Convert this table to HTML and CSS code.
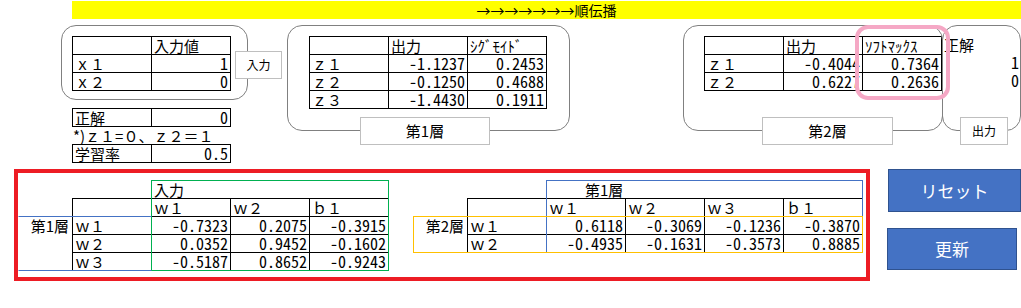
FILE: index.html
```html
<!DOCTYPE html>
<html lang="ja">
<head>
<meta charset="utf-8">
<title>順伝播</title>
<link rel="stylesheet" href="styles.css">
</head>
<body>
<div class="sheet">
  <div class="title">→→→→→→→順伝播</div>

  <div class="tbl t1">
    <div class="c"></div><div class="c">入力値</div>
    <div class="c">ｘ１</div><div class="c n">1</div>
    <div class="c">ｘ２</div><div class="c n">0</div>
  </div>

  <div class="tbl t-ans">
    <div class="c">正解</div><div class="c n">0</div>
  </div>
  <div class="note">*)ｚ１=０、ｚ２＝１</div>
  <div class="tbl t-lr">
    <div class="c">学習率</div><div class="c n">0.5</div>
  </div>

  <div class="tbl t2">
    <div class="c"></div><div class="c">出力</div><div class="c kana">ｼｸﾞﾓｲﾄﾞ</div>
    <div class="c">ｚ１</div><div class="c n">-1.1237</div><div class="c n">0.2453</div>
    <div class="c">ｚ２</div><div class="c n">-0.1250</div><div class="c n">0.4688</div>
    <div class="c">ｚ３</div><div class="c n">-1.4430</div><div class="c n">0.1911</div>
  </div>

  <div class="tbl t3">
    <div class="c"></div><div class="c">出力</div><div class="c kana">ｿﾌﾄﾏｯｸｽ</div>
    <div class="c">ｚ１</div><div class="c n">-0.4044</div><div class="c n">0.7364</div>
    <div class="c">ｚ２</div><div class="c n">0.6227</div><div class="c n">0.2636</div>
  </div>
  <div class="col-ans">
    <div class="c">正解</div>
    <div class="c n">1</div>
    <div class="c n">0</div>
  </div>

  <div class="head h-in">入力</div>
  <div class="side s1">第1層</div>
  <div class="tbl w1">
    <div class="c"></div><div class="c">ｗ１</div><div class="c">ｗ２</div><div class="c">ｂ１</div>
    <div class="c">ｗ１</div><div class="c n">-0.7323</div><div class="c n">0.2075</div><div class="c n">-0.3915</div>
    <div class="c">ｗ２</div><div class="c n">0.0352</div><div class="c n">0.9452</div><div class="c n">-0.1602</div>
    <div class="c">ｗ３</div><div class="c n">-0.5187</div><div class="c n">0.8652</div><div class="c n">-0.9243</div>
  </div>

  <div class="head h-l1">第1層</div>
  <div class="side s2">第2層</div>
  <div class="tbl w2">
    <div class="c"></div><div class="c">ｗ１</div><div class="c">ｗ２</div><div class="c">ｗ３</div><div class="c">ｂ１</div>
    <div class="c">ｗ１</div><div class="c n">0.6118</div><div class="c n">-0.3069</div><div class="c n">-0.1236</div><div class="c n">-0.3870</div>
    <div class="c">ｗ２</div><div class="c n">-0.4935</div><div class="c n">-0.1631</div><div class="c n">-0.3573</div><div class="c n">0.8885</div>
  </div>
</div>

<!-- floating shapes over the sheet -->
<div class="shape round r-a"></div>
<div class="shape round r-b"></div>
<div class="shape round r-c"></div>
<div class="shape round r-d"></div>

<div class="shape label l-in small">入力</div>
<div class="shape label l-1">第1層</div>
<div class="shape label l-2">第2層</div>
<div class="shape label l-out small">出力</div>

<div class="shape pink"></div>

<div class="shape range g-box"></div>
<div class="shape range b-left"></div>
<div class="shape range b-right"></div>
<div class="shape range o-box"></div>

<div class="shape red"></div>

<div class="shape btn btn-reset">リセット</div>
<div class="shape btn btn-update">更新</div>
</body>
</html>
```

FILE: styles.css
```css
html, body {
  margin: 0;
  padding: 0;
  background: #fff;
}

body {
  position: relative;
  width: 1021px;
  height: 308px;
  overflow: hidden;
  font-family: "Noto Sans CJK JP", "Noto Sans", sans-serif;
  font-size: 15px;
  line-height: 18px;
  color: #000;
}

.sheet {
  display: grid;
  grid-template-columns: 55px repeat(12, 79px);
  grid-template-rows: repeat(17, 18px);
  margin: 1px 0 0 18px;
}

.title {
  grid-column: 2 / 14;
  grid-row: 1;
  margin-left: -1px;
  background: #ffff00;
  text-align: center;
  font-size: 14px;
  white-space: nowrap;
}

.tbl {
  display: grid;
  grid-auto-rows: 18px;
  border-top: 1px solid #000;
  border-left: 1px solid #000;
  margin: -1px 0 0 -1px;
}

.c {
  border-right: 1px solid #000;
  border-bottom: 1px solid #000;
  padding: 0 2px;
  white-space: nowrap;
  height: 18px;
  line-height: 17px;
  box-sizing: border-box;
}

.n {
  text-align: right;
  font-size: 16px;
  font-feature-settings: "hwid" 1;
}

.kana {
  font-size: 15px;
}

.t1 { grid-column: 2 / 4; grid-row: 3 / 6; grid-template-columns: repeat(2, 79px); }
.t-ans { grid-column: 2 / 4; grid-row: 7 / 8; grid-template-columns: repeat(2, 79px); }
.t-lr { grid-column: 2 / 4; grid-row: 9 / 10; grid-template-columns: repeat(2, 79px); }
.note { grid-column: 2 / 6; grid-row: 8; white-space: nowrap; }

.t2 { grid-column: 5 / 8; grid-row: 3 / 7; grid-template-columns: repeat(3, 79px); }
.t3 { grid-column: 10 / 13; grid-row: 3 / 6; grid-template-columns: repeat(3, 79px); }

.col-ans {
  grid-column: 13 / 14;
  grid-row: 3 / 6;
  display: grid;
  grid-auto-rows: 18px;
  margin-top: -1px;
}
.col-ans .c { border: none; }

.head { grid-row: 11; white-space: nowrap; padding-left: 2px; }
.h-in { grid-column: 3 / 6; }
.h-l1 { grid-column: 8 / 12; padding-left: 38px; }

.side { grid-row: 13; text-align: right; padding-right: 4px; white-space: nowrap; }
.s1 { grid-column: 1 / 2; }
.s2 { grid-column: 6 / 7; }

.w1 { grid-column: 2 / 6; grid-row: 12 / 16; grid-template-columns: repeat(4, 79px); }
.w2 { grid-column: 7 / 12; grid-row: 12 / 15; grid-template-columns: repeat(5, 79px); }

/* floating shapes */
.shape {
  position: absolute;
  box-sizing: border-box;
}

.round {
  border: 1.5px solid #808080;
  border-radius: 15px;
}
.r-a { left: 61px; top: 25px; width: 187px; height: 75px; }
.r-b { left: 287px; top: 25px; width: 283px; height: 106px; }
.r-c { left: 683px; top: 25px; width: 260px; height: 106px; }
.r-d { left: 942px; top: 25px; width: 79px; height: 106px; }

.label {
  background: #fff;
  border: 1px solid #bfbfbf;
  display: flex;
  align-items: center;
  justify-content: center;
  font-size: 15px;
}
.label.small { font-size: 12px; }
.l-in { left: 235px; top: 51px; width: 47px; height: 28px; }
.l-1 { left: 360px; top: 117px; width: 130px; height: 28px; }
.l-2 { left: 762px; top: 117px; width: 131px; height: 28px; }
.l-out { left: 960px; top: 117px; width: 48px; height: 28px; }

.pink {
  left: 855px; top: 25px; width: 95px; height: 75px;
  border: 4px solid #f5a8c5;
  border-radius: 13px;
}

.range { border: 1px solid transparent; }
.g-box { left: 151px; top: 180px; width: 238px; height: 91px; border-color: #00b050; }
.b-left {
  left: 18px; top: 216px; width: 134px; height: 55px;
  border-top-color: #4472c4; border-bottom-color: #4472c4;
}
.b-right { left: 546px; top: 180px; width: 317px; height: 73px; border-color: #4472c4; }
.o-box { left: 413px; top: 216px; width: 450px; height: 37px; border-color: #ffc000; }

.red {
  left: 14px; top: 169px; width: 856px; height: 112px;
  border: 4px solid #ed1c24;
}

.btn {
  background: #4472c4;
  border: 1px solid #2f528f;
  color: #fff;
  font-size: 17px;
  display: flex;
  align-items: center;
  justify-content: center;
}
.btn-reset { left: 888px; top: 169px; width: 133px; height: 43px; }
.btn-update { left: 887px; top: 228px; width: 130px; height: 42px; }
```
